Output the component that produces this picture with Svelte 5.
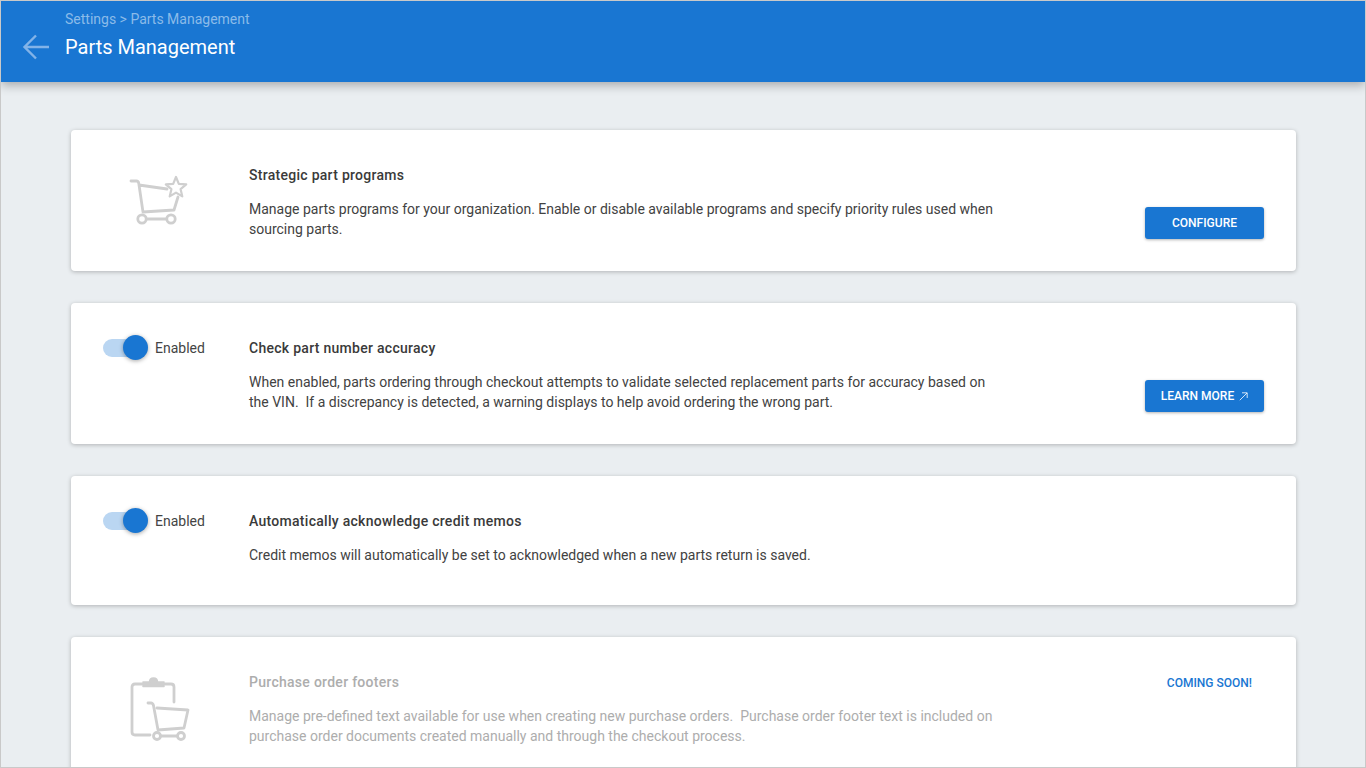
<script lang="ts">
  // Settings cards shown on the parts management page
  interface Card {
    title: string;
    body: string;
    icon?: 'star' | 'clipboard';
    toggle?: boolean;
    action?: string;
    external?: boolean;
    soon?: boolean;
  }

  const cards: Card[] = [
    {
      title: 'Strategic part programs',
      body: 'Manage parts programs for your organization. Enable or disable available programs and specify priority rules used when sourcing parts.',
      icon: 'star',
      action: 'CONFIGURE'
    },
    {
      title: 'Check part number accuracy',
      body: 'When enabled, parts ordering through checkout attempts to validate selected replacement parts for accuracy based on the VIN.\u00a0 If a discrepancy is detected, a warning displays to help avoid ordering the wrong part.',
      toggle: true,
      action: 'LEARN MORE',
      external: true
    },
    {
      title: 'Automatically acknowledge credit memos',
      body: 'Credit memos will automatically be set to acknowledged when a new parts return is saved.',
      toggle: true
    },
    {
      title: 'Purchase order footers',
      body: 'Manage pre-defined text available for use when creating new purchase orders.\u00a0 Purchase order footer text is included on purchase order documents created manually and through the checkout process.',
      icon: 'clipboard',
      soon: true
    }
  ];
</script>

<div class="page">
  <header class="topbar">
    <button class="back" aria-label="Back">
      <svg width="28" height="28" viewBox="0 0 28 28" fill="none" stroke="currentColor" stroke-width="2.4">
        <path d="M27 14H3M14 2.500L2.500 14 14 25.500" />
      </svg>
    </button>
    <div class="titles">
      <div class="crumb">Settings &gt; Parts Management</div>
      <h1>Parts Management</h1>
    </div>
  </header>

  <main class="content">
    {#each cards as card}
      <section class="card" class:muted={card.soon} class:short={!card.action && !card.soon}>
        <div class="lead">
          {#if card.toggle}
            <div class="switch">
              <span class="track"><span class="thumb"></span></span>
              <span class="switch-label">Enabled</span>
            </div>
          {:else if card.icon === 'star'}
            <svg class="art" width="60" height="52" viewBox="0 0 60 52" fill="none" stroke="#cfcfcf" stroke-width="2.800" stroke-linecap="round" stroke-linejoin="round">
              <path d="M2 7h5.500c1.500 0 2 .8 2.300 2.500L14 38l31-2 4-13M10 11l28 4" />
              <circle cx="13" cy="45" r="4.200" />
              <circle cx="42" cy="45" r="4.200" />
              <path d="M17.500 45h20" />
              <path d="M47 3l2.800 6.800 7.400.6-5.600 4.800 1.700 7.200L47 18.600l-6.300 3.800 1.700-7.200-5.600-4.800 7.400-.6z" stroke-width="2.200" />
            </svg>
          {:else}
            <svg class="art tall" width="62" height="70" viewBox="0 0 62 70" fill="none" stroke="#cfcfcf" stroke-width="2.800" stroke-linecap="round" stroke-linejoin="round">
              <path d="M13 11H6c-2 0-3 1-3 3v45c0 2 1 3 3 3h15M36 11h6c2 0 3 1 3 3v15" />
              <path d="M14 13.500V9h6.500c0-5.500 8-5.500 8 0H35v4.500z" fill="#cfcfcf" stroke-width="1.500" />
              <path d="M19 30h3c1.500 0 2 .8 2.500 2.500L29 57l26-2 4-18-31-2" />
              <circle cx="28" cy="63" r="3.500" />
              <circle cx="52" cy="63" r="3.500" />
              <path d="M32 63h16" />
            </svg>
          {/if}
        </div>
        <div class="copy">
          <h2>{card.title}</h2>
          <p>{card.body}</p>
        </div>
        {#if card.action}
          <button class="action">
            {card.action}
            {#if card.external}
              <svg width="9" height="9" viewBox="0 0 9 9" fill="none" stroke="currentColor" stroke-width="0.8">
                <path d="M.800 8.200L8 1M3 .800h5.200V6" />
              </svg>
            {/if}
          </button>
        {/if}
        {#if card.soon}
          <span class="soon">COMING SOON!</span>
        {/if}
      </section>
    {/each}
  </main>
</div>

<style>
  :global(body) {
    background: #eaeef1;
    overflow: hidden;
  }
  .page {
    height: 768px;
    box-sizing: border-box;
    overflow: hidden;
    border: 1px solid #c9c9c9;
    background: #eaeef1;
    font-family: Roboto, "Liberation Sans", sans-serif;
    color: #424242;
  }
  .topbar {
    height: 81px;
    background: #1976d2;
    display: flex;
    align-items: flex-start;
    box-shadow: 0 3px 10px rgba(0, 0, 0, 0.3);
    position: relative;
  }
  .back {
    margin: 32px 0 0 21px;
    padding: 0;
    width: 28px;
    height: 28px;
    border: 0;
    background: none;
    color: #82b3e8;
  }
  .titles {
    margin-left: 15px;
    padding-top: 10px;
  }
  .crumb {
    font-size: 14px;
    line-height: 16px;
    color: #8bbbe9;
  }
  h1 {
    margin: 8px 0 0;
    font-size: 20px;
    line-height: 24px;
    font-weight: 400;
    color: #fff;
  }
  .content {
    padding: 48px 69px 0 70px;
    display: flex;
    flex-direction: column;
    gap: 32px;
  }
  .card {
    position: relative;
    display: flex;
    min-height: 141px;
    box-sizing: border-box;
    padding: 36px 32px 0;
    background: #fff;
    border-radius: 4px;
    box-shadow: 0 1px 4px rgba(0, 0, 0, 0.25);
  }
  .card.short {
    min-height: 129px;
  }
  .lead {
    width: 146px;
    flex: none;
  }
  .art {
    display: block;
    margin: 8px 0 0 26px;
  }
  .art.tall {
    margin-top: 0;
  }
  .switch {
    display: flex;
    align-items: center;
    height: 18px;
  }
  .track {
    position: relative;
    display: block;
    width: 40px;
    height: 18px;
    border-radius: 9px;
    background: #bad6f2;
  }
  .thumb {
    position: absolute;
    top: -4px;
    left: 20px;
    width: 25px;
    height: 25px;
    border-radius: 50%;
    background: #1976d2;
    box-shadow: 0 1px 4px rgba(0, 0, 0, 0.35);
  }
  .switch-label {
    margin-left: 12px;
    font-size: 14px;
    color: #444;
  }
  .copy {
    width: 752px;
  }
  h2 {
    margin: 0;
    font-size: 14px;
    line-height: 18px;
    font-weight: 500;
    color: #3a3a3a;
    letter-spacing: 0.28px;
  }
  p {
    margin: 15px 0 0;
    font-size: 14px;
    line-height: 20px;
    color: #424242;
  }
  .action {
    position: absolute;
    right: 32px;
    bottom: 32px;
    height: 32px;
    width: 119px;
    padding: 0;
    display: flex;
    align-items: center;
    justify-content: center;
    gap: 5px;
    border: 0;
    border-radius: 3px;
    background: #1976d2;
    color: #fff;
    font: 500 12px Roboto, sans-serif;
    box-shadow: 0 1px 3px rgba(0, 0, 0, 0.3);
  }
  .soon {
    position: absolute;
    top: 39px;
    right: 44px;
    font-size: 12px;
    font-weight: 500;
    color: #1976d2;
  }
  .muted h2,
  .muted p {
    color: #adadad;
  }
</style>
